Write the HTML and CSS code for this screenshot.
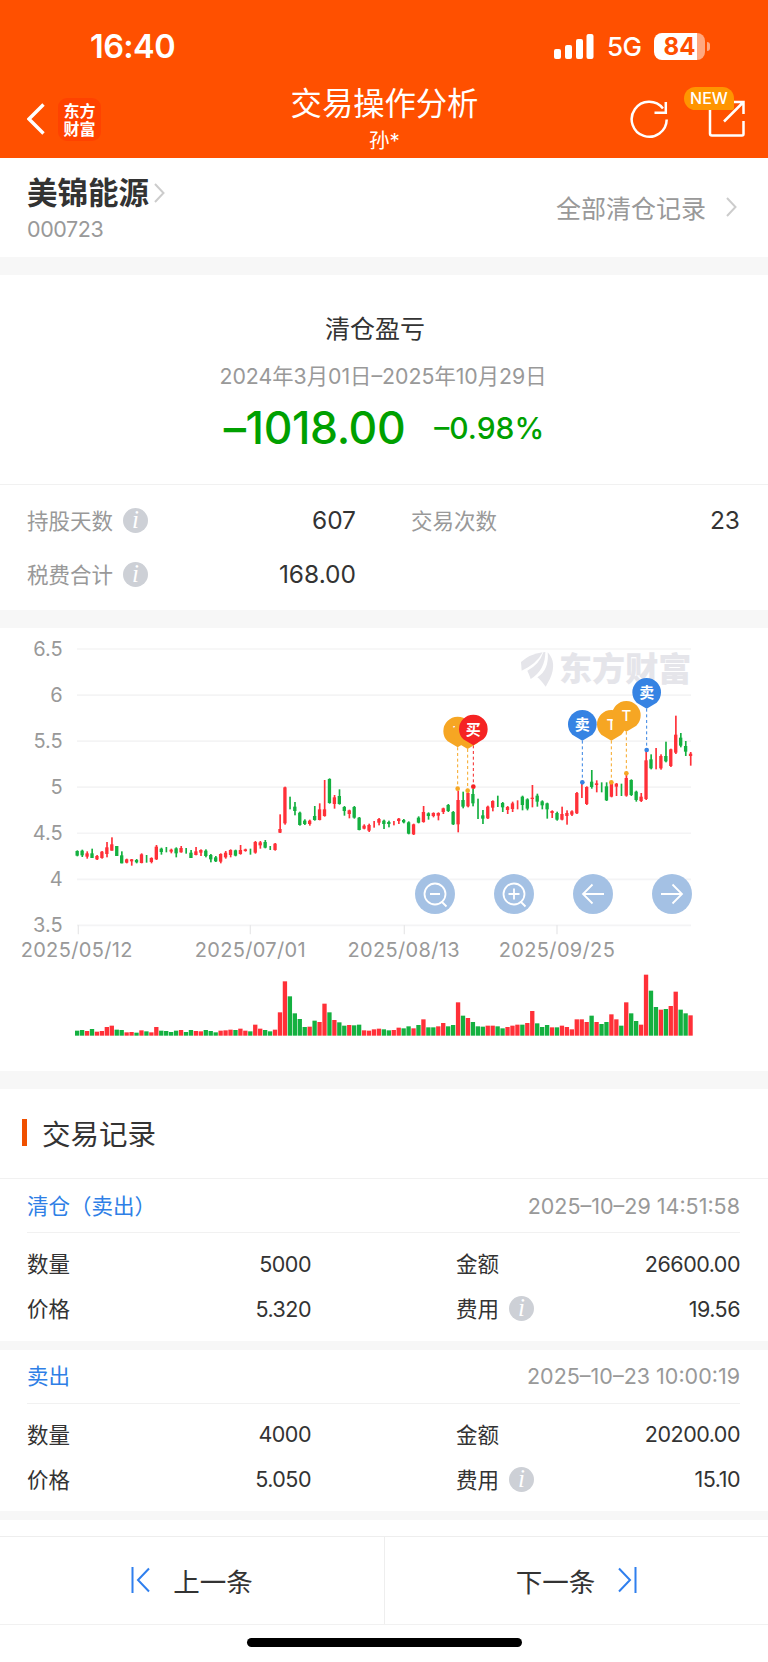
FILE: index.html
```html
<!DOCTYPE html>
<html lang="zh-CN">
<head>
  <meta charset="UTF-8" />
  <meta name="viewport" content="width=device-width, initial-scale=1.0"/>
  <title>交易操作分析</title>
  <link rel="stylesheet" href="styles.css">
</head>
<body>

<header class="header">
  <div class="status-bar">
    <span class="time">16:40</span>
    <div class="status-right">
      <svg class="signal" width="40" height="26" viewBox="0 0 40 26" fill="#fff">
        <rect x="0" y="15" width="7" height="10" rx="2"/>
        <rect x="11" y="11" width="7" height="14" rx="2"/>
        <rect x="22" y="5" width="7" height="20" rx="2"/>
        <rect x="32.500" y="0" width="7" height="25" rx="2"/>
      </svg>
      <span class="network">5G</span>
      <div class="battery"><span>84</span></div>
      <i class="battery-cap"></i>
    </div>
  </div>
  <div class="nav-bar">
    <div class="nav-left">
      <svg width="18" height="32" viewBox="0 0 18 32" fill="none" stroke="#fff" stroke-width="3.400"><path d="M16.500 1.500L2 16l14.500 14.500"/></svg>
      <div class="app-logo">东方<br>财富</div>
    </div>
    <div class="nav-title">
      <h1>交易操作分析</h1>
      <p>孙*</p>
    </div>
    <div class="nav-right">
      <svg width="40" height="40" viewBox="0 0 40 40" fill="none" stroke="#fff" stroke-width="2.500"><path d="M37.700 20.500A17.500 17.500 0 1 1 34 9.500M36.800 3v10.700H25.500"/></svg>
      <div class="share">
        <svg width="38" height="38" viewBox="0 0 38 38" fill="none" stroke="#fff" stroke-width="2.500"><path d="M2 8v25.500q0 2 2 2h30q1.500 0 1.500-1.500V21M35.500 14V2H24M35 2.500L16 21.500"/></svg>
        <span class="new-badge">NEW</span>
      </div>
    </div>
  </div>
</header>

<section class="stock">
  <div>
    <h2>美锦能源<svg width="11" height="20" viewBox="0 0 11 20" fill="none" stroke="#ccc" stroke-width="2"><path d="M1 1l8.500 9L1 19"/></svg></h2>
    <p class="code">000723</p>
  </div>
  <a class="all-records">全部清仓记录<svg width="11" height="20" viewBox="0 0 11 20" fill="none" stroke="#ccc" stroke-width="2"><path d="M1 1l8.500 9L1 19"/></svg></a>
</section>

<section class="profit">
  <h3>清仓盈亏</h3>
  <p class="range">2024年3月01日–2025年10月29日</p>
  <div class="amount"><b>–1018.00</b><span>–0.98%</span></div>
</section>

<section class="stats">
  <div class="stat"><label>持股天数</label><i class="info">i</i><span>607</span></div>
  <div class="stat"><label>交易次数</label><span>23</span></div>
  <div class="stat"><label>税费合计</label><i class="info">i</i><span>168.00</span></div>
</section>

<section class="chart-box">
  <svg id="chart" width="768" height="443" viewBox="0 -6 2304 1329"></svg>
  <div class="chart-tools">
    <button><svg viewBox="0 0 40 40"><circle cx="20" cy="20" r="10.500"/><path d="M15 20h10M26.500 27.500l5 5"/></svg></button>
    <button><svg viewBox="0 0 40 40"><circle cx="20" cy="20" r="10.500"/><path d="M14.500 20h11M20 14.500v11M26.500 27.500l5 5"/></svg></button>
    <button><svg viewBox="0 0 40 40"><path d="M31 20H10M19.500 10.500L10 20l9.500 9.500"/></svg></button>
    <button><svg viewBox="0 0 40 40"><path d="M9 20h21M20.500 10.500L30 20l-9.500 9.500"/></svg></button>
  </div>
</section>

<section class="records">
  <h3 class="records-title">交易记录</h3>

  <div class="record">
    <div class="record-head"><span class="type">清仓（卖出）</span><span class="date">2025–10–29 14:51:58</span></div>
    <div class="record-body">
      <div class="cell"><label>数量</label><span>5000</span></div>
      <div class="cell"><label>金额</label><span>26600.00</span></div>
      <div class="cell"><label>价格</label><span>5.320</span></div>
      <div class="cell"><label>费用</label><i class="info">i</i><span>19.56</span></div>
    </div>
  </div>

  <div class="record">
    <div class="record-head"><span class="type">卖出</span><span class="date">2025–10–23 10:00:19</span></div>
    <div class="record-body">
      <div class="cell"><label>数量</label><span>4000</span></div>
      <div class="cell"><label>金额</label><span>20200.00</span></div>
      <div class="cell"><label>价格</label><span>5.050</span></div>
      <div class="cell"><label>费用</label><i class="info">i</i><span>15.10</span></div>
    </div>
  </div>
</section>

<footer class="pager">
  <a><svg width="20" height="26" viewBox="0 0 20 26" fill="none" stroke="#2f7fee" stroke-width="2"><path d="M1.500 0v26M18 1.500L7 13l11 11.500"/></svg>上一条</a>
  <a>下一条<svg width="20" height="26" viewBox="0 0 20 26" fill="none" stroke="#2f7fee" stroke-width="2"><path d="M18.500 0v26M2 1.500L13 13 2 24.500"/></svg></a>
</footer>
<div class="home-indicator"></div>

<script src="chart.js"></script>
</body>
</html>
```

FILE: styles.css
```css
* {
  box-sizing: border-box;
}
body {
  font-family: Inter, "Noto Sans CJK SC", sans-serif;
  margin: 0;
  padding: 0;
  width: 768px;
  height: 1662px;
  overflow: hidden;
  background-color: #fff;
  color: #333;
}
h1, h2, h3, p {
  margin: 0;
  font-weight: 400;
}
svg {
  display: block;
  flex-shrink: 0;
}

/* Header */
.header {
  height: 158px;
  background-color: #ff5000;
  color: #fff;
}
.status-bar {
  display: flex;
  justify-content: space-between;
  align-items: center;
  height: 92px;
  padding: 1px 58px 0 90px;
}
.time {
  font-size: 32.5px;
  font-weight: 600;
  line-height: 40px;
  letter-spacing: -0.6px;
}
.status-right {
  display: flex;
  align-items: center;
}
.network {
  margin-left: 13px;
  width: 47px;
  font-size: 26px;
  font-weight: 500;
  line-height: 30px;
  letter-spacing: -0.5px;
}
.battery {
  width: 51px;
  height: 27px;
  border-radius: 8px;
  background: linear-gradient(90deg, #fff 43px, #ffa880 43px);
  color: #ff5000;
  font-size: 24px;
  font-weight: 700;
  line-height: 27px;
  text-align: center;
}
.battery-cap {
  width: 3px;
  height: 9px;
  margin-left: 2px;
  border-radius: 0 4px 4px 0;
  background-color: #ffa880;
}
.nav-bar {
  display: grid;
  grid-template-columns: 1fr auto 1fr;
  height: 66px;
  padding: 0 22px 0 23px;
}
.nav-left {
  display: flex;
  align-items: center;
  gap: 13px;
  height: 54px;
  padding-left: 4px;
}
.app-logo {
  width: 43px;
  height: 43px;
  padding-top: 3px;
  border-radius: 9px;
  background-color: #ff4200;
  font-family: "Noto Sans CJK SC", sans-serif;
  font-size: 16px;
  font-weight: 700;
  line-height: 18px;
  text-align: center;
}
.nav-title {
  text-align: center;
}
.nav-title h1 {
  margin-top: -10px;
  font-size: 31.3px;
  line-height: 44px;
}
.nav-title p {
  font-size: 20.5px;
  line-height: 30px;
}
.nav-right {
  display: flex;
  justify-content: flex-end;
  align-items: center;
  gap: 39px;
  height: 54px;
}
.share {
  position: relative;
}
.new-badge {
  position: absolute;
  left: -24px;
  top: -13px;
  width: 50px;
  height: 23px;
  border-radius: 12px 12px 2px 12px;
  background-color: #ff9500;
  font-size: 16px;
  font-weight: 500;
  line-height: 23px;
  text-align: center;
}

/* Stock */
.stock {
  display: flex;
  justify-content: space-between;
  height: 117px;
  padding: 15px 31px 0 27px;
  border-bottom: 18px solid #f7f7f7;
}
.stock h2 {
  display: flex;
  align-items: center;
  gap: 5px;
  font-size: 30.5px;
  font-weight: 700;
  line-height: 40px;
}
.code {
  margin-top: 2px;
  color: #999;
  font-size: 21.5px;
  line-height: 28px;
  letter-spacing: -0.4px;
}
.all-records {
  display: flex;
  align-items: center;
  gap: 20px;
  height: 67px;
  color: #999;
  font-size: 25px;
}

/* Profit */
.profit {
  height: 210px;
  padding-top: 36px;
  border-bottom: 1px solid #f1f1f1;
  text-align: center;
}
.profit h3 {
  padding-right: 18px;
  font-size: 25px;
  line-height: 36px;
}
.range {
  margin-top: 14px;
  padding-right: 2px;
  color: #999;
  font-size: 21.3px;
  line-height: 30px;
}
.amount {
  display: flex;
  justify-content: center;
  align-items: center;
  gap: 29px;
  margin-top: 9px;
  color: #00a000;
}
.amount b {
  font-size: 44.5px;
  font-weight: 500;
  line-height: 56px;
  letter-spacing: -0.4px;
}
.amount span {
  font-size: 30px;
  font-weight: 500;
}

/* Stats */
.stats {
  display: grid;
  grid-template-columns: 329px 329px;
  grid-auto-rows: 54px;
  column-gap: 55px;
  height: 143px;
  padding: 8px 28px 0 27px;
  border-bottom: 18px solid #f7f7f7;
}
.stat, .cell {
  display: flex;
  align-items: center;
}
.stat label, .cell label {
  padding-bottom: 2px;
}
.stat label {
  color: #999;
  font-size: 21.5px;
}
.stat span {
  margin-left: auto;
  font-size: 24.5px;
}
.info {
  width: 25px;
  height: 25px;
  margin-left: 10px;
  border-radius: 50%;
  background-color: #cdd0d6;
  color: #fff;
  font: italic 25px/24px "Liberation Serif", serif;
  text-align: center;
}

/* Chart */
.chart-box {
  position: relative;
  height: 461px;
  border-bottom: 18px solid #f7f7f7;
}
.chart-tools {
  position: absolute;
  left: 415px;
  top: 246px;
  display: flex;
  gap: 39px;
}
.chart-tools button {
  width: 40px;
  height: 40px;
  padding: 0;
  border: none;
  border-radius: 50%;
  background-color: rgba(159, 190, 227, 0.95);
}
.chart-tools svg {
  fill: none;
  stroke: #fff;
  stroke-width: 1.8;
}
.axis-label {
  fill: #999;
  font-size: 60px;
}
.date-label {
  letter-spacing: 1px;
}
.watermark {
  fill: #e5e5ea;
  font-family: "Noto Sans CJK SC", sans-serif;
  font-size: 100px;
  font-weight: 900;
}
.pin-text {
  fill: #fff;
  font-size: 45px;
  font-weight: 500;
  text-anchor: middle;
}
.pin-text-cn {
  font-weight: 700;
}

/* Records */
.records {
  height: 447px;
}
.records-title {
  display: flex;
  align-items: center;
  gap: 15px;
  height: 90px;
  padding: 0 0 2px 22px;
  border-bottom: 1px solid #f1f1f1;
  font-size: 28.5px;
}
.records-title::before {
  content: "";
  width: 5px;
  height: 27px;
  background-color: #f05000;
}
.record {
  height: 170.5px;
  padding: 0 28px 0 27px;
  border-bottom: 9px solid #f7f7f7;
}
.record-head {
  display: flex;
  justify-content: space-between;
  align-items: center;
  height: 54px;
  border-bottom: 1px solid #f1f1f1;
  font-size: 21.5px;
}
.type {
  padding-bottom: 3px;
  color: #2f7fe6;
}
.date {
  color: #999;
}
.record-body {
  display: grid;
  grid-template-columns: 284px 284px;
  grid-auto-rows: 45px;
  column-gap: 145px;
  padding-top: 8px;
  font-size: 21.5px;
}
.cell span {
  margin-left: auto;
  letter-spacing: -0.5px;
}

/* Pager */
.pager {
  display: grid;
  grid-template-columns: 1fr 1fr;
  height: 89px;
  border-top: 1px solid #eee;
  border-bottom: 1px solid #f1f1f1;
}
.pager a {
  display: flex;
  justify-content: center;
  align-items: center;
  gap: 22px;
  padding-bottom: 1px;
  font-size: 26.5px;
}
.pager a:last-child {
  border-left: 1px solid #eee;
}
.home-indicator {
  width: 275px;
  height: 9px;
  margin: 13px auto 0;
  border-radius: 5px;
  background-color: #000;
}
```

FILE: chart.js
```js
// [color, high, low, body top, body bottom, volume top]
const bars = [
  ['g',661,679,663,677,1202],['g',659,681,662,676,1200],['r',664,686,670,680,1203],['g',656,684,670,684,1197],
  ['r',675,690,678,688,1205],['r',663,686,665,684,1203],['r',636,682,652,672,1191],['r',622,662,643,662,1187],
  ['g',648,678,648,678,1199],['g',664,700,676,700,1200],['r',686,700,688,698,1207],['r',687,707,688,694,1206],
  ['g',687,700,690,697,1208],['r',670,700,673,699,1201],['g',675,698,0,0,1204],['r',682,700,684,696,1207],
  ['r',645,690,650,688,1191],['g',653,674,656,666,1202],['g',651,667,0,0,1203],['r',656,670,659,665,1206,'g'],
  ['g',652,682,655,670,1202],['r',648,668,654,667,1200],['g',654,671,0,0,1206],['g',660,684,668,684,1200],
  ['r',651,676,664,675,1203],['r',658,678,660,668,1204],['g',658,682,662,678,1200],['g',672,697,675,688,1203],
  ['g',678,696,682,694,1207],['r',670,700,672,695,1202],['r',663,686,668,682,1201],['r',658,682,660,675,1199],
  ['g',659,679,661,677,1200],['r',645,674,660,672,1196],['r',656,665,658,663,1202],['g',656,674,0,0,1204],
  ['r',633,671,636,668,1184],['r',633,656,637,646,1196],['g',630,655,636,653,1200],['g',648,660,0,0,1204],
  ['r',639,662,641,660,1199],['r',553,609,597,608,1147],['r',470,584,472,580,1054],['g',500,538,0,0,1099],
  ['g',516,556,530,543,1150],['g',545,587,548,585,1167],['g',568,585,572,582,1191],['r',569,587,572,582,1190],
  ['g',528,572,558,570,1172],['r',520,571,538,570,1176],['r',450,560,538,558,1121],['g',445,521,447,519,1147],
  ['r',495,536,502,522,1170],['g',478,524,498,522,1177],['g',528,557,531,543,1187],['r',539,565,541,552,1185],
  ['g',528,566,531,563,1186],['g',561,601,563,600,1184],['r',583,598,587,596,1201],['r',581,606,585,602,1202],
  ['r',573,593,0,0,1198],['r',564,586,567,578,1196],['g',569,597,572,582,1198],['g',572,592,576,582,1201],
  ['r',573,586,0,0,1200],['r',564,582,566,573,1193],['g',567,580,570,577,1195],['g',574,613,577,611,1189],
  ['r',581,615,583,613,1195],['g',559,580,563,578,1185],['r',528,578,546,576,1168],['g',547,569,550,558,1192],
  ['r',547,562,549,558,1192,'g'],['r',547,571,549,557,1189],['r',533,552,535,546,1179],['g',522,546,525,543,1189],
  ['g',543,585,546,583,1185],['r',482,607,510,583,1117],['g',485,535,510,530,1157],['r',487,532,489,529,1164],
  ['g',477,529,492,520,1176],['g',506,567,0,0,1189],['g',540,582,556,566,1190],['r',527,567,530,565,1187],
  ['r',511,544,513,533,1187],['g',497,531,0,0,1189],['g',516,546,519,532,1195],['r',528,552,531,540,1191],
  ['r',515,546,520,537,1187],['r',511,538,0,0,1184],['g',497,541,500,525,1184],['r',505,541,508,536,1179,'r','g'],
  ['r',465,532,503,507,1143],['g',491,530,497,515,1180],['g',511,538,514,526,1191],['g',518,566,520,538,1185],
  ['r',541,564,543,549,1192],['g',545,572,549,569,1192],['r',530,571,552,569,1187],['r',541,584,549,558,1191],
  ['r',541,558,544,554,1198],['r',486,552,489,550,1168],['r',456,504,0,0,1168],['r',469,525,471,522,1176],
  ['g',420,476,455,471,1157],['r',451,487,460,465,1176],['g',457,487,0,0,1182],['g',457,513,469,511,1176],
  ['r',455,502,458,500,1153],['r',459,498,461,470,1168],['g',461,498,0,0,1187],['r',430,500,444,497,1117],
  ['g',448,498,450,495,1150],['g',482,515,485,510,1173],['r',489,516,500,513,1184],['r',362,510,391,507,1034],
  ['g',373,418,388,415,1082],['r',354,418,0,0,1131,'g'],['r',373,419,378,415,1139],['g',335,397,378,394,1137],
  ['r',356,411,358,408,1128],['r',257,372,314,368,1085],['g',309,352,323,347,1139],['g',333,378,348,365,1150],
  ['r',366,407,371,378,1156]
];

// x, circle y, dot y, color, text
const pins = [
  [1373, 303, 476, '#f6a623', 'T'],
  [1403, 308, 482, '#f6a623', 'T'],
  [1420, 297, 470, '#f52323', '买'],
  [1747, 283, 457, '#3683e3', '卖'],
  [1834, 283, 457, '#f6a623', 'T'],
  [1879, 256, 430, '#f6a623', 'T'],
  [1940, 187, 360, '#3683e3', '卖']
];

const colors = { r: '#ff3038', g: '#14b040' };
const volumeBase = 1217;
let out = '';

// grid and axes
['6.5', '6', '5.5', '5', '4.5', '4', '3.5'].forEach((label, i) => {
  const y = 57 + i * 138.2;
  out += `<path d="M231 ${y}H2073" stroke="#f4f4f5" stroke-width="5"/>`;
  out += `<text class="axis-label" x="188" y="${y + 21}" text-anchor="end">${label}</text>`;
});
[[235, '2025/05/12', 230], [751, '2025/07/01', 751], [1213, '2025/08/13', 1211], [1671, '2025/09/25', 1671]].forEach(([x, label, tx]) => {
  out += `<path d="M${x} 885v28" stroke="#e9e9ea" stroke-width="4"/>`;
  out += `<text class="axis-label date-label" x="${tx}" y="982" text-anchor="middle">${label}</text>`;
});

// watermark
out += `<g fill="#e5e5ea"><path d="M1563 96q27-24 65-29-18 35-63 55z"/>
  <path d="M1636 66l-6 1q-12 37-48 55 8 18 10 25 44-27 44-81z"/>
  <path d="M1643 67q29 31 7 79l-13 24q-15-20-25-28 36-22 31-75z"/></g>
  <text class="watermark" x="1677" y="153" textLength="397" lengthAdjust="spacingAndGlyphs">东方财富</text>`;

bars.forEach(([color, high, low, top, bottom, vol, volColor, candleColor], i) => {
  const x = 231.5 + i * 14.84;
  const fill = colors[candleColor || color];
  out += `<rect x="${x - 2}" y="${high}" width="5" height="${low - high}" fill="${fill}"/>`;
  if (bottom) {
    out += `<rect x="${x - 5}" y="${top}" width="10" height="${bottom - top}" fill="${fill}"/>`;
  }
  out += `<rect x="${x - 6.5}" y="${vol}" width="13" height="${volumeBase - vol}" fill="${colors[volColor || color]}"/>`;
});

pins.forEach(([x, y, dot, color]) => {
  out += `<path d="M${x} ${y + 49}V${dot}" stroke="${color}" stroke-width="3" stroke-dasharray="9 8"/>`;
  out += `<circle cx="${x}" cy="${dot}" r="7" fill="${color}"/>`;
});
pins.forEach(([x, y, dot, color, text]) => {
  out += `<path d="M${x} ${y + 49}L${x - 30} ${y + 31}A43 43 0 1 1 ${x + 30} ${y + 31}Z" fill="${color}"/>`;
  out += `<text class="pin-text${text === 'T' ? '' : ' pin-text-cn'}" x="${x}" y="${y + 17}">${text}</text>`;
});

document.getElementById('chart').innerHTML = out;
```
